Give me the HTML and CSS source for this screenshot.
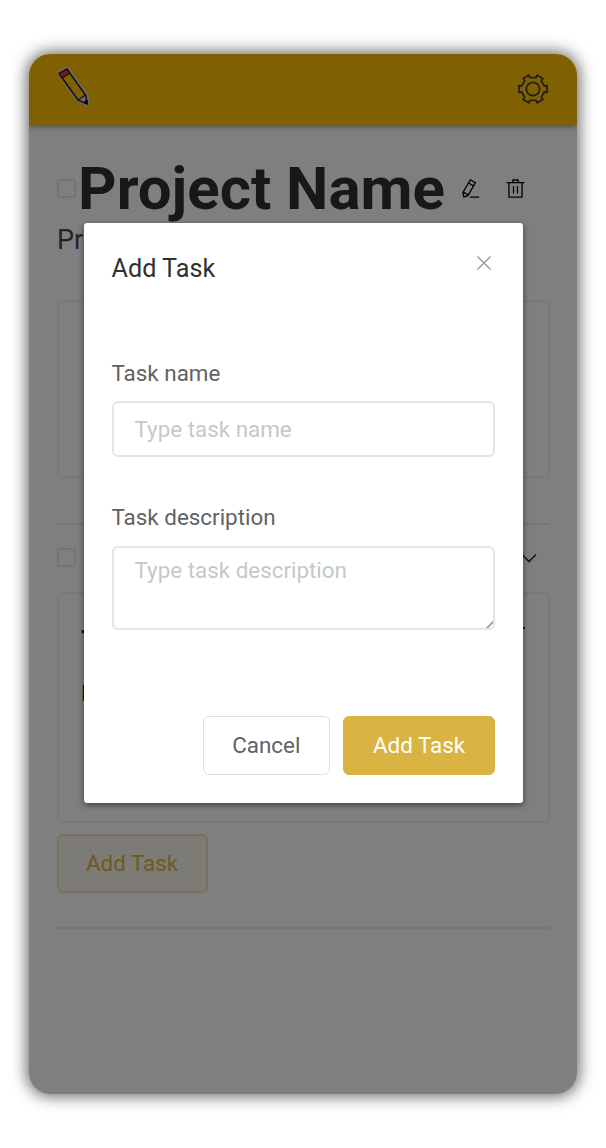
FILE: index.html
```html
<!DOCTYPE html>
<html lang="en">
<head>
<meta charset="utf-8">
<title>Project</title>
<link rel="stylesheet" href="styles.css">
</head>
<body>
<div class="phone">
  <header class="bar">
    <svg class="logo" viewBox="0 0 34 40" width="34" height="40">
      <path d="M3 6 11 1.500 30 28 32 37.500 22 33Z" fill="#ded9c8" stroke="#ded9c8" stroke-width="4" stroke-linejoin="round"/>
      <path d="M3 6.500 11 2 29.500 28 31.500 37 22 33Z" fill="#ffc107" stroke="#1c2230" stroke-width="1.500" stroke-linejoin="round"/>
      <path d="M3 6.500 11 2 13.500 6.500 6 11Z" fill="#ff2a40" stroke="#1c3020" stroke-width="1.100"/>
      <path d="M22 33 29.500 28 31.500 37Z" fill="#eec6bd" stroke="#252530" stroke-width="1.200"/>
      <path d="M28 35.500 30.500 33 31.500 37Z" fill="#111" stroke="#111"/>
    </svg>
    <svg class="gear" viewBox="-15 -15 30 30" width="30" height="30">
      <path d="M14 -3.200V3.200L11.300 3 8.300 8.300 9.800 10.500 4.200 13.800 3 11.300H-3L-4.200 13.800-9.800 10.500-8.300 8.300-11.300 3-14 3.200V-3.200L-11.300-3-8.300-8.300-9.800-10.500-4.200-13.800-3-11.300H3L4.200-13.800 9.800-10.500 8.300-8.300 11.300-3Z"/>
      <circle r="6.700"/>
    </svg>
  </header>
  <main class="content">
    <div class="heading">
      <span class="check"></span>
      <h1>Project Name</h1>
      <svg class="icon edit" viewBox="0 0 1024 1024"><path d="m199.040 672.640 193.984 112 224-387.968-193.920-112-224 388.032zm-23.872 60.160 32.896 148.288 144.896-45.696L175.168 732.800zM455.040 229.248l193.920 112 56.704-98.112-193.984-112-56.640 98.112zM104.320 708.800l384-665.024 304.768 175.936L409.152 884.800h.064l-248.448 78.336L104.320 708.800zm384 254.272v-64h448v64h-448z"/></svg>
      <svg class="icon" viewBox="0 0 1024 1024"><path d="M160 256H96a32 32 0 0 1 0-64h256V95.936a32 32 0 0 1 32-32h256a32 32 0 0 1 32 32V192h256a32 32 0 1 1 0 64h-64v672a32 32 0 0 1-32 32H192a32 32 0 0 1-32-32V256zm448-64v-64H416v64h192zM224 896h576V256H224v640zm192-128a32 32 0 0 1-32-32V416a32 32 0 0 1 64 0v320a32 32 0 0 1-32 32zm192 0a32 32 0 0 1-32-32V416a32 32 0 0 1 64 0v320a32 32 0 0 1-32 32z"/></svg>
    </div>
    <p class="lead">Project</p>
    <section class="card summary"></section>
    <hr>
    <div class="row">
      <span class="check"></span>
      <svg class="chevron" viewBox="0 0 16 10" width="16" height="10"><path d="M1 1.500 8 8.500 15 1.500"/></svg>
    </div>
    <section class="card task">
      <div class="task-head"><h2>Task</h2><span class="dash"></span></div>
      <p>D</p>
    </section>
    <button class="btn plain">Add Task</button>
    <hr class="end">
  </main>
  <div class="overlay">
    <form class="dialog">
      <div class="dialog-head">
        <h3>Add Task</h3>
        <svg class="close" viewBox="0 0 14 14" width="14" height="14"><path d="M.5.5 13.500 13.500M13.500.5.5 13.500"/></svg>
      </div>
      <label for="name">Task name</label>
      <input id="name" class="field" placeholder="Type task name">
      <label for="desc">Task description</label>
      <textarea id="desc" class="field area" placeholder="Type task description"></textarea>
      <div class="actions">
        <button type="button" class="btn">Cancel</button>
        <button type="button" class="btn primary">Add Task</button>
      </div>
    </form>
  </div>
</div>
</body>
</html>
```
FILE: styles.css
```css
* { box-sizing: border-box; }
body {
  margin: 0;
  padding: 54px 29px;
  background: #fff;
  font-family: Roboto, "Liberation Sans", sans-serif;
  font-size: 22.4px;
  color: #606266;
}
h1, h2, h3, p { margin: 0; }
.phone {
  position: relative;
  width: 548px;
  height: 1040px;
  border-radius: 21px;
  overflow: hidden;
  background: #fff;
  box-shadow: 0 0 16px 2px rgba(0, 0, 0, .62);
}
.bar {
  display: flex;
  justify-content: space-between;
  height: 71px;
  padding: 13px 29px 0 27px;
  background: #ffc107;
  box-shadow: 0 1px 6px rgba(0, 10, 40, .5);
}
.gear {
  margin-top: 7px;
  fill: none;
  stroke: #48442e;
  stroke-width: 1.8;
}
.content { padding: 27px 27px 0 28px; }
.heading { display: flex; align-items: center; height: 72px; }
.check {
  flex: none;
  width: 19px;
  height: 19px;
  border: 2px solid #e6e8ea;
  border-radius: 3px;
}
h1 {
  margin: 2px 15px 0 2px;
  font-size: 60px;
  line-height: 70px;
  color: #303133;
  white-space: nowrap;
}
.icon { flex: none; width: 21px; height: 21px; }
.edit { margin-right: 24px; }
.lead { font-size: 27px; line-height: 32px; color: #48494c; }
.card { border: 2px solid #f0f1f2; border-radius: 6px; }
.summary { height: 178px; margin-top: 44px; }
hr { height: 2px; margin: 45px 0 0; border: 0; background: #ecedee; }
.row {
  display: flex;
  align-items: center;
  justify-content: space-between;
  height: 67px;
  padding: 0 13px 2px 0;
}
.chevron { fill: none; stroke: #303133; stroke-width: 1.6; }
.task { height: 231px; padding: 18px 23px 0 22px; color: #303133; }
.task-head { display: flex; justify-content: space-between; align-items: center; height: 44px; }
.task h2 { padding-top: 14px; font-size: 27px; line-height: 44px; }
.dash { width: 18px; height: 2px; margin-bottom: 12px; background: #303133; }
.task p { margin-top: 21px; line-height: 32px; }
.btn {
  height: 59px;
  padding: 0 28px 1px;
  border: 1.5px solid #dcdfe6;
  border-radius: 6px;
  background: #fff;
  font: inherit;
  color: #606266;
}
.plain {
  display: block;
  width: 151px;
  margin-top: 11px;
  padding: 0 1px 1px 0;
  background: #fbf6ec;
  border: 2px solid #f0e1c0;
  color: #dab442;
}
.end { margin-top: 34px; }
.overlay {
  position: absolute;
  inset: 0;
  display: flex;
  justify-content: center;
  padding: 168.5px 0 0 .5px;
  background: rgba(0, 0, 0, .5);
}
.dialog {
  display: flex;
  flex-direction: column;
  width: 439.5px;
  height: 580.5px;
  padding: 28px;
  background: #fff;
  border-radius: 3px;
  box-shadow: 0 2px 6px rgba(0, 0, 0, .5);
}
.dialog-head { display: flex; justify-content: space-between; height: 103.500px; }
h3 { font-size: 25.2px; font-weight: 400; line-height: 35px; color: #303133; }
.close { margin: 5.5px 4px 0 0; fill: none; stroke: #909399; stroke-width: 1.3; }
label { height: 47px; line-height: 38px; }
.field {
  flex: none;
  display: block;
  width: 100%;
  height: 56px;
  margin-bottom: 42px;
  padding: 0 21px 1px;
  border: 2px solid #e4e5e6;
  border-radius: 6px;
  font: inherit;
}
label[for="desc"] { margin-top: -1px; height: 48px; }
.field::placeholder { color: #c4c8cc; }
.area { height: 84px; padding-top: 6px; line-height: 32px; overflow: hidden; }
.area::-webkit-resizer { background: linear-gradient(135deg, transparent 75%, #aaa 75%, #aaa 85%, transparent 85%); }
.actions { display: flex; justify-content: flex-end; gap: 13px; margin-top: auto; }
.actions .btn { width: 127.500px; padding: 0 0 1px; }
.actions .primary { width: 152px; background: #dab442; border-color: #dab442; color: #fff; }
```
